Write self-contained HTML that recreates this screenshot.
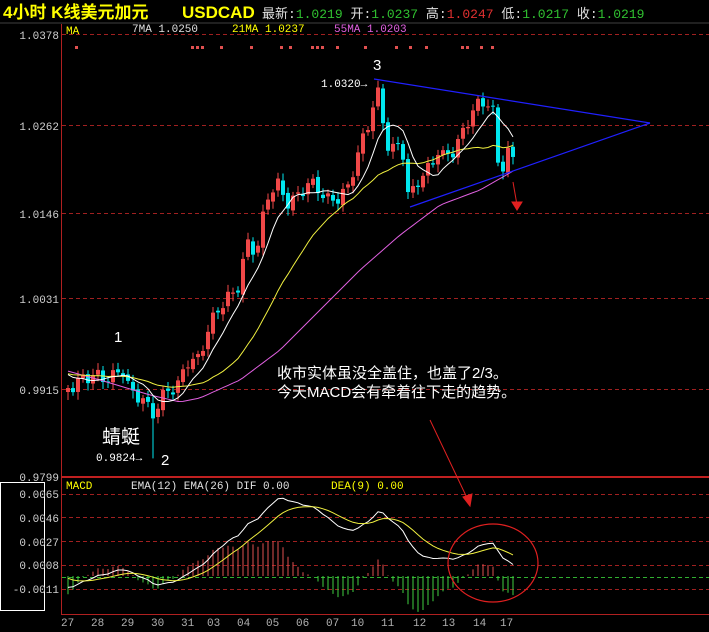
<!DOCTYPE html>
<html><head><meta charset="utf-8"><style>
html,body{margin:0;padding:0;background:#000;width:709px;height:632px;overflow:hidden}
svg{display:block}
text{font-family:"Liberation Mono","DejaVu Sans Mono",monospace}
.cn{font-family:"Liberation Sans","Noto Sans CJK SC",sans-serif}
</style></head><body>
<svg id="s" width="709" height="632" xmlns="http://www.w3.org/2000/svg">
<rect width="709" height="632" fill="#000"/>
<text x="3" y="18" class="cn" font-size="17" font-weight="bold" fill="#ffff00">4小时 K线美元加元</text>
<text x="182" y="18" class="cn" font-size="17" font-weight="bold" fill="#ffff00">USDCAD</text>
<text x="262" y="18" font-size="13" fill="#e0e0e0"><tspan class="cn">最新</tspan>:<tspan fill="#30c030">1.0219</tspan> <tspan class="cn">开</tspan>:<tspan fill="#30c030">1.0237</tspan> <tspan class="cn">高</tspan>:<tspan fill="#e03030">1.0247</tspan> <tspan class="cn">低</tspan>:<tspan fill="#30c030">1.0217</tspan> <tspan class="cn">收</tspan>:<tspan fill="#30c030">1.0219</tspan></text>
<line x1="0" y1="23" x2="709" y2="23" stroke="#404040"/>
<line x1="61.5" y1="24" x2="61.5" y2="614" stroke="#b02020"/>
<line x1="61" y1="477" x2="709" y2="477" stroke="#c02020" stroke-width="2"/>
<line x1="61" y1="614.5" x2="709" y2="614.5" stroke="#b02020"/>
<rect x="0.5" y="482.5" width="44" height="128" fill="none" stroke="#fff"/>
<g stroke="#a02020" stroke-dasharray="4,3">
<line x1="62" y1="34.5" x2="709" y2="34.5"/><line x1="62" y1="125.5" x2="709" y2="125.5"/>
<line x1="62" y1="213.5" x2="709" y2="213.5"/><line x1="62" y1="298.5" x2="709" y2="298.5"/>
<line x1="62" y1="389.5" x2="709" y2="389.5"/>
<line x1="62" y1="494.5" x2="709" y2="494.5"/><line x1="62" y1="517.5" x2="709" y2="517.5"/>
<line x1="62" y1="541.5" x2="709" y2="541.5"/><line x1="62" y1="565.5" x2="709" y2="565.5"/>
<line x1="62" y1="589.5" x2="709" y2="589.5"/>
</g>
<line x1="62" y1="577.5" x2="709" y2="577.5" stroke="#30b030" stroke-dasharray="4,3"/>
<g font-size="11" fill="#d0d0d0" text-anchor="end">
<text x="59" y="39">1.0378</text><text x="59" y="130">1.0262</text><text x="59" y="218">1.0146</text>
<text x="59" y="303">1.0031</text><text x="59" y="394">0.9915</text><text x="59" y="481">0.9799</text>
<text x="59" y="498">0.0065</text><text x="59" y="522">0.0046</text><text x="59" y="546">0.0027</text>
<text x="59" y="569">0.0008</text><text x="59" y="593">-0.0011</text>
</g>
<text x="66" y="34" font-size="11" fill="#ffff00">MA</text>
<text x="132" y="32" font-size="11" fill="#e0e0e0">7MA 1.0250</text>
<text x="232" y="32" font-size="11" fill="#ffff00">21MA 1.0237</text>
<text x="334" y="32" font-size="11" fill="#e060e0">55MA 1.0203</text>
<text x="66" y="489" font-size="11" fill="#ffff00">MACD</text>
<text x="131" y="489" font-size="11" fill="#e0e0e0">EMA(12) EMA(26) DIF 0.00</text>
<text x="331" y="489" font-size="11" fill="#ffff00">DEA(9) 0.00</text>
<g id="dots" fill="#e05050"></g>
<g id="candles"></g>
<g id="mas" fill="none"></g>
<g id="macd" fill="none"></g>
<g fill="#fff">
<text x="114" y="342" font-size="15" class="cn">1</text>
<text x="161" y="465" font-size="15" class="cn">2</text>
<text x="373" y="70" font-size="15" class="cn">3</text>
<text x="102" y="443" font-size="19" class="cn">蜻蜓</text>
<text x="277" y="378" font-size="15" class="cn">收市实体虽没全盖住，也盖了2/3。</text>
<text x="277" y="397" font-size="15" class="cn">今天MACD会有牵着往下走的趋势。</text>
</g>
<text x="96" y="461" font-size="11" fill="#fff">0.9824→</text>
<text x="321" y="87" font-size="11" fill="#fff">1.0320→</text>
<g stroke="#2020ff" stroke-width="1.2">
<line x1="374" y1="79" x2="650" y2="123"/><line x1="410" y1="207" x2="650" y2="123"/>
</g>
<g stroke="#e02020" fill="#e02020">
<line x1="513" y1="182" x2="517" y2="205"/><polygon points="512,202 522,202 517,210"/>
<line x1="430" y1="420" x2="468" y2="500"/><polygon points="463,497 472,494 470,506"/>
</g>
<ellipse cx="493" cy="563" rx="45" ry="39" fill="none" stroke="#e02020" stroke-width="1.2"/>
<g font-size="11" fill="#b0b0b0">
<text x="61" y="626">27</text><text x="91" y="626">28</text><text x="121" y="626">29</text><text x="151" y="626">30</text>
<text x="181" y="626">31</text><text x="207" y="626">03</text><text x="237" y="626">04</text><text x="266" y="626">05</text>
<text x="296" y="626">06</text><text x="326" y="626">07</text><text x="351" y="626">10</text><text x="381" y="626">11</text>
<text x="413" y="626">12</text><text x="442" y="626">13</text><text x="473" y="626">14</text><text x="500" y="626">17</text>
</g>
</svg>
<script>
(function(){
var NS="http://www.w3.org/2000/svg";
function el(p,t,a){var e=document.createElementNS(NS,t);for(var k in a)e.setAttribute(k,a[k]);p.appendChild(e);return e;}
var kp=[[66,385],[80,380],[95,378],[110,375],[120,365],[128,395],[140,400],[150,412],[155,405],[165,388],[175,392],[185,362],[195,360],[205,330],[215,312],[225,302],[235,290],[245,240],[255,250],[265,200],[275,185],[285,200],[295,195],[305,185],[315,190],[325,200],[335,195],[345,190],[355,160],[365,130],[372,100],[378,88],[383,138],[390,150],[400,145],[405,198],[410,195],[418,175],[428,165],[436,150],[442,160],[450,155],[458,140],[465,120],[472,105],[480,102],[488,105],[492,120],[496,165],[500,170],[505,150],[511,158]];
function interp(x,P){for(var i=0;i<P.length-1;i++){if(x>=P[i][0]&&x<=P[i+1][0]){var t=(x-P[i][0])/(P[i+1][0]-P[i][0]);return P[i][1]+t*(P[i+1][1]-P[i][1]);}}return P[P.length-1][1];}
var N=90,cl=[],xs=[];
for(var i=0;i<N;i++){var x=66+5*i;xs.push(x);cl.push(interp(x,kp)+7*Math.sin(i*1.9)+3*Math.cos(i*0.7));}
var g=document.getElementById("candles");
for(var i=0;i<N;i++){var o=(i==0?392:cl[i-1]+2*Math.sin(i*3.1)),c=cl[i];var up=c<o;var col=up?"#f04848":"#00e8f0";
var tp=Math.min(o,c),bt=Math.max(o,c);if(bt-tp<1)bt=tp+1;
var hw=3+4*Math.abs(Math.sin(i*2.3)),lw=3+5*Math.abs(Math.cos(i*1.7));
if(i==17)lw=40;
el(g,"line",{x1:xs[i]+2,x2:xs[i]+2,y1:tp-hw,y2:bt+lw,stroke:col});
el(g,"rect",{x:xs[i],y:tp,width:4,height:bt-tp,fill:col});}
function sma(n){var pre=[];for(var j=0;j<n;j++)pre.push(372+j*0.1);var a=pre.concat(cl),r=[];for(var i=0;i<N;i++){var s=0;for(var j=0;j<n;j++)s+=a[i+n-j];r.push(s/n);}return r;}
function poly(p,arr,col){var pts=[];for(var i=0;i<arr.length;i++)pts.push((xs[i]+2)+","+arr[i].toFixed(1));el(p,"polyline",{points:pts.join(" "),stroke:col,"stroke-width":1});}
var m=document.getElementById("mas");
var mp=[[64,370],[100,380],[150,395],[180,402],[200,398],[240,380],[280,350],[320,310],[360,270],[400,235],[440,205],[480,190],[515,170]];
poly(m,xs.map(function(x){return interp(x+2,mp)}),"#e060e0");
poly(m,sma(21),"#f0f040");poly(m,sma(7),"#ffffff");
var dx=[75,191,196,201,220,250,280,289,311,316,321,336,364,395,409,425,461,466,480,491];
var dg=document.getElementById("dots");dx.forEach(function(x){el(dg,"rect",{x:x,y:46,width:3,height:3});});
function price(y){return 1.0378-(y-34)*(0.0579/442);}
var e12=price(cl[0]),e26=price(cl[0]),dea=0,dif=[],de=[];
for(var i=0;i<N;i++){var p=price(cl[i]);e12=e12+(p-e12)*2/13;e26=e26+(p-e26)*2/27;var d=e12-e26+(i<10?-0.0009*(1-i/10):0);dea=dea+(d-dea)*0.2;dif.push(d);de.push(dea);}
var mg=document.getElementById("macd");function my(v){return 576-v*12632;}
for(var i=0;i<N;i++){var h=(dif[i]-de[i])*2;el(mg,"line",{x1:xs[i]+2,x2:xs[i]+2,y1:576,y2:my(h),stroke:h>0?"#e05050":"#40d040"});}
poly(mg,dif.map(my),"#ffffff");poly(mg,de.map(my),"#f0f040");
})();
</script>
</body></html>
